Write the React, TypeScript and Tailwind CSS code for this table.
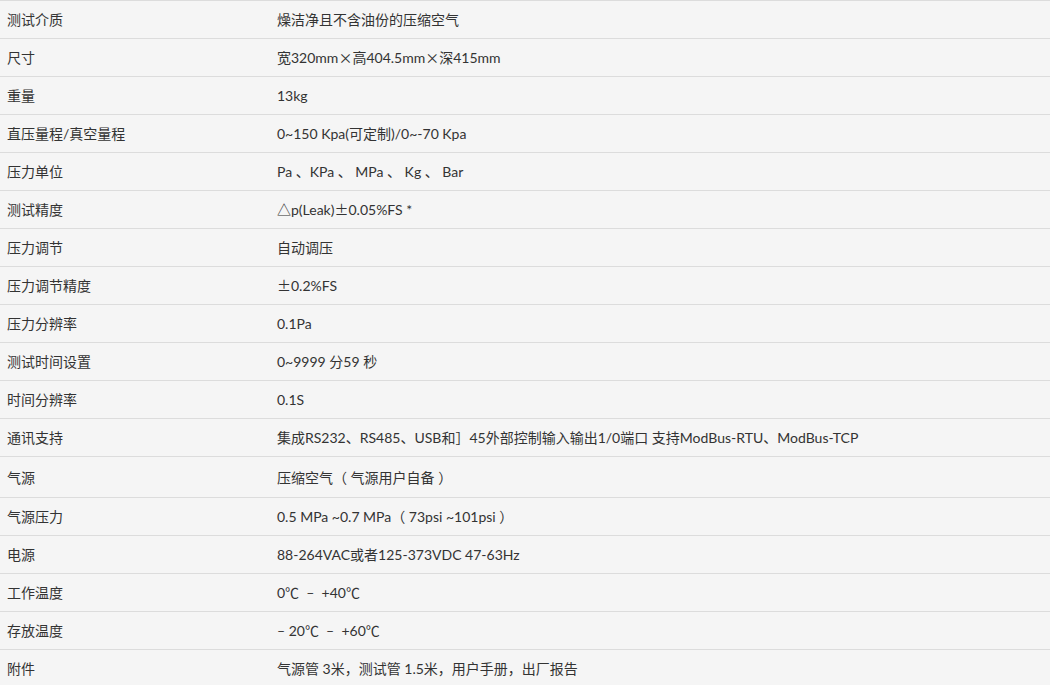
import React from "react";

const X = () => <span className="font-['Noto_Sans_CJK_SC',sans-serif]">×</span>;
const PM = () => <span className="font-['Noto_Sans_CJK_SC',sans-serif]">±</span>;

const rows: { label: string; value: React.ReactNode; tall?: boolean }[] = [
  { label: "测试介质", value: "燥洁净且不含油份的压缩空气" },
  {
    label: "尺寸",
    value: (
      <>
        宽320mm<X />高404.5mm<X />深415mm
      </>
    ),
  },
  { label: "重量", value: "13kg" },
  { label: "直压量程/真空量程", value: "0~150 Kpa(可定制)/0~-70 Kpa" },
  { label: "压力单位", value: "Pa 、KPa 、 MPa 、 Kg 、 Bar" },
  {
    label: "测试精度",
    value: (
      <>
        △p(Leak)<PM />0.05%FS *
      </>
    ),
  },
  { label: "压力调节", value: "自动调压" },
  {
    label: "压力调节精度",
    value: (
      <>
        <PM />0.2%FS
      </>
    ),
  },
  { label: "压力分辨率", value: "0.1Pa" },
  { label: "测试时间设置", value: "0~9999 分59 秒" },
  { label: "时间分辨率", value: "0.1S" },
  { label: "通讯支持", value: "集成RS232、RS485、USB和］45外部控制输入输出1/0端口 支持ModBus-RTU、ModBus-TCP" },
  { label: "气源", value: "压缩空气（ 气源用户自备 ）", tall: true },
  { label: "气源压力", value: "0.5 MPa ~0.7 MPa（ 73psi ~101psi ）" },
  { label: "电源", value: "88-264VAC或者125-373VDC 47-63Hz" },
  { label: "工作温度", value: "0℃\u00a0\u00a0–\u00a0\u00a0+40℃" },
  { label: "存放温度", value: "–\u00a020℃\u00a0\u00a0–\u00a0\u00a0+60℃" },
  { label: "附件", value: "气源管 3米，测试管 1.5米，用户手册，出厂报告" },
];

export default function App() {
  return (
    <div className="w-[1050px] h-[685px] overflow-hidden bg-[#f5f5f5] text-[14px] text-[#333333] font-['Lato','Noto_Sans_CJK_SC',sans-serif]">
      {rows.map((r, i) => (
        <div key={i} className={r.tall ? "flex h-[41px] border-t border-[#dcdcdc]" : "flex h-[38px] border-t border-[#dcdcdc]"}>
          <div className="w-[270px] pl-[7px] flex items-center">{r.label}</div>
          <div className="flex-1 pl-[7px] flex items-center whitespace-pre">{r.value}</div>
        </div>
      ))}
    </div>
  );
}
